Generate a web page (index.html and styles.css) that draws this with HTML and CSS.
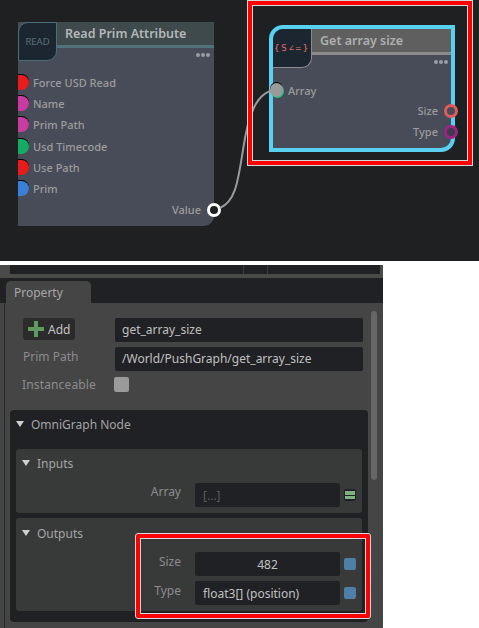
FILE: index.html
```html
<!DOCTYPE html>
<html lang="en">
<head>
<meta charset="utf-8">
<title>Get array size</title>
<link rel="stylesheet" href="styles.css">
</head>
<body>
<section class="canvas">
  <svg class="wire" width="479" height="261" viewBox="0 0 479 261"><path d="M220 208 C236 201 238 180 243 150 C248 116 256 92 275 90" fill="none" stroke="#9a9a9a" stroke-width="2"/></svg>
  <div class="node read">
    <div class="icon icon-read">READ</div>
    <div class="head head-read">Read Prim Attribute</div>
    <div class="dots"><i></i><i></i><i></i></div>
    <ul class="inputs">
      <li><span class="port red"></span>Force USD Read</li>
      <li><span class="port pink"></span>Name</li>
      <li><span class="port pink"></span>Prim Path</li>
      <li><span class="port green"></span>Usd Timecode</li>
      <li><span class="port red"></span>Use Path</li>
      <li><span class="port blue"></span>Prim</li>
    </ul>
    <div class="value-row">Value<span class="ring ring-white"></span></div>
  </div>
  <div class="node size">
    <div class="icon icon-size">{S∠=}</div>
    <div class="head head-size">Get array size</div>
    <div class="dots dots-size"><i></i><i></i><i></i></div>
    <div class="array-row"><span class="array-port"></span>Array</div>
    <div class="out-row">Size<span class="ring ring-coral"></span></div>
    <div class="out-row">Type<span class="ring ring-purple"></span></div>
  </div>
  <div class="mark mark-top"></div>
</section>
<section class="panel">
  <div class="strip"><div class="strip-cells"><i></i><i></i></div></div>
  <div class="tabs"><div class="tab">Property</div></div>
  <div class="body">
    <div class="scroll"></div>
    <div class="form">
      <div class="add"><svg width="16" height="16" viewBox="0 0 16 16"><path d="M6 0h4v6h6v4h-6v6H6v-6H0V6h6z" fill="#5f9a5f"/></svg>Add</div>
      <div class="field">get_array_size</div>
      <div class="label label-prim">Prim Path</div>
      <div class="field">/World/PushGraph/get_array_size</div>
      <div class="label label-inst">Instanceable</div>
      <div class="check"></div>
    </div>
    <div class="frame">
      <div class="title title-top"><span class="tri"></span>OmniGraph Node</div>
      <div class="sub sub-in">
        <div class="title title-in"><span class="tri"></span>Inputs</div>
        <div class="row row-in">
          <div class="row-label">Array</div>
          <div class="val val-dim">[...]</div>
          <div class="eq"><i></i><i></i></div>
        </div>
      </div>
      <div class="sub sub-out">
        <div class="title"><span class="tri"></span>Outputs</div>
        <div class="rows">
          <div class="row">
            <div class="row-label">Size</div>
            <div class="val val-center">482</div>
            <div class="sq"></div>
          </div>
          <div class="row">
            <div class="row-label">Type</div>
            <div class="val">float3[] (position)</div>
            <div class="sq"></div>
          </div>
        </div>
      </div>
    </div>
  </div>
  <div class="mark mark-bottom"></div>
</section>
</body>
</html>
```
FILE: styles.css
```css
* { box-sizing: border-box; }
html, body { margin: 0; padding: 0; background: #fff; }
body { width: 479px; height: 628px; overflow: hidden; font-family: "Noto Sans", "DejaVu Sans", sans-serif; }
i { display: block; }

.canvas { position: relative; height: 261px; background: #1f2022; overflow: hidden; }
.wire { position: absolute; left: 0; top: 0; z-index: 2; }
.node { position: absolute; background: #484c58; color: #9c9c9c; font-size: 11px; font-weight: 500; }
.read { left: 18px; top: 22px; width: 196px; height: 204px; border-bottom-right-radius: 10px; }
.size { left: 269px; top: 25px; width: 186px; height: 127px; border: 4px solid #5ad0f0; border-radius: 14px 0 14px 0; z-index: 1; }

.icon { position: absolute; left: 0; top: 0; width: 39px; height: 39px; background: #1c2630; display: flex; align-items: center; justify-content: center; border-radius: 10px 0 10px 0; }
.icon-read { border: 1px solid #4d6f78; color: #5a7078; font-size: 9.5px; font-weight: 400; }
.icon-size { border-right: 1px solid #8a8a8a; border-bottom: 1px solid #8a8a8a; color: #f0716c; font-family: "DejaVu Sans Mono", monospace; font-size: 9px; font-weight: 400; letter-spacing: 1.8px; white-space: nowrap; }

.head { margin-left: 39px; height: 26px; padding-left: 8px; font-size: 12.5px; font-weight: 600; color: #b4b8b8; line-height: 23px; }
.head-read { background: #3f4a4d; border-bottom: 3px solid #52727a; }
.head-size { background: #5f5f5f; border-bottom: 3px solid #8a8a8a; color: #aeb0b0; }

.dots { display: flex; justify-content: flex-end; gap: 1px; padding: 5px 4px 0 0; }
.dots i { width: 4px; height: 4px; border-radius: 50%; background: #9a9ca4; }

.inputs { list-style: none; margin: 15px 0 0; padding: 0; }
.inputs li { display: flex; align-items: center; height: 21.2px; }
.port { width: 11px; height: 15px; margin-right: 4px; border-radius: 0 8px 8px 0; box-shadow: 0 -1px 0 #000; }
.red { background: #e81c1c; }
.pink { background: #c83ba0; }
.green { background: #14ac64; }
.blue { background: #3a7fd8; }

.value-row { position: absolute; right: -7px; top: 180px; display: flex; align-items: center; gap: 6px; }
.ring { width: 14px; height: 14px; border-radius: 50%; background: #1f2022; border: 3px solid #fff; }
.ring-white { border-width: 3.5px; }
.ring-coral { border-color: #e15b5b; background: #484c58; }
.ring-purple { border-color: #9c2480; background: #3f3a50; }

.dots-size { padding-right: 3px; }
.array-row { display: flex; align-items: center; margin-top: 16px; height: 20px; gap: 5px; position: relative; }
.array-port { width: 13px; height: 14px; margin-left: -3px; border-radius: 50%; background: #9a9a9a; box-shadow: 1px 1px 0 #1cc47c, 0 -1px 0 #000; }
.out-row { display: flex; align-items: center; justify-content: flex-end; gap: 6px; height: 21px; margin-right: -7px; }

.mark { position: absolute; border: 4px solid #f00; outline: 1px solid #d8d8d8; box-shadow: inset 0 0 0 1px #d8d8d8; pointer-events: none; z-index: 3; }
.mark-top { left: 248px; top: 1px; width: 224px; height: 164px; }
.mark-bottom { left: 136px; top: 269px; width: 234px; height: 84px; border-radius: 2px; }

.panel { position: relative; width: 383px; height: 363px; margin-top: 4px; background: #454545; overflow: hidden; }
.strip { height: 13px; padding: 0 3px 4px 10px; background: #4a4a4a; }
.strip-cells { height: 9px; background: #202124; display: flex; justify-content: flex-end; padding-right: 112px; gap: 23px; }
.strip-cells i { width: 1px; background: #3c3c3c; }
.tabs { height: 25px; background: #202124; padding: 3px 0 0 6px; }
.tab { width: 85px; height: 22px; background: #454545; border-radius: 5px 5px 0 0; padding-left: 8px; color: #a8a8a8; font-size: 12px; line-height: 23px; }

.body { position: relative; height: 325px; padding: 15px 15px 0 10px; }
.body::before { content: ""; position: absolute; left: 4px; top: 0; bottom: 0; width: 1px; background: #2c2c2c; }
.scroll { position: absolute; left: 371px; top: 8px; width: 6px; height: 169px; background: #666; border-radius: 3px; }

.form { display: grid; grid-template-columns: 52px 248px; column-gap: 40px; row-gap: 5px; margin-left: 13px; color: #8c8c8c; font-size: 12px; grid-template-rows: 24px 24px 21px; }
.add { display: flex; align-items: center; gap: 4px; height: 22px; padding-left: 5px; background: #2b2b2b; border-radius: 3px; color: #c4c4c4; font-size: 12px; }
.field { background: #202124; border-radius: 2px; color: #c0c0c0; font-size: 12px; line-height: 24px; padding-left: 7px; white-space: nowrap; }
.label { white-space: nowrap; }
.label-prim { line-height: 20px; }
.label-inst { line-height: 18px; margin-left: -1px; letter-spacing: .15px; }
.check { width: 15px; height: 15px; background: #9a9a9a; border-radius: 2px; margin-top: 1px; margin-left: -1px; }

.frame { width: 358px; height: 212px; margin-top: 13px; padding: 0 6px; background: #202124; border-radius: 4px; color: #a8a8a8; font-size: 12px; }
.title { display: flex; align-items: center; gap: 7px; height: 30px; padding-left: 6px; white-space: nowrap; color: #a4a4a4; }
.title-top { height: 39px; padding-left: 0; padding-bottom: 11px; }
.title-in { padding-bottom: 2px; }
.tri { width: 0; height: 0; border: 4px solid transparent; border-top: 6px solid #d0d0d0; border-bottom: 0; }
.sub { background: #383a3a; border-radius: 3px; }
.sub-in { height: 64px; }
.sub-out { height: 93px; margin-top: 5px; }
.row-in { margin-top: 4px; }
.row-in .row-label { margin-top: -6px; }
.rows { margin-top: 4px; display: flex; flex-direction: column; gap: 5px; }
.row { display: grid; grid-template-columns: 165px 145px 16px; column-gap: 14px; align-items: center; height: 24px; }
.row-label { text-align: right; color: #8c8c8c; line-height: 18px; margin-top: -4px; }
.val { background: #202124; height: 24px; border-radius: 2px; line-height: 25px; padding-left: 8px; color: #c0c0c0; white-space: nowrap; }
.val-dim { color: #5c5c5c; }
.val-center { text-align: center; padding-left: 0; }
.sq { width: 12px; height: 12px; background: #4f7fa8; border-radius: 2px; margin-left: -10px; }
.eq { width: 12px; height: 12px; margin-left: -10px; background: #202124; border-radius: 2px; padding: 2px 1px; display: flex; flex-direction: column; gap: 1px; }
.eq i { height: 3.5px; background: #7fb07f; }
```
